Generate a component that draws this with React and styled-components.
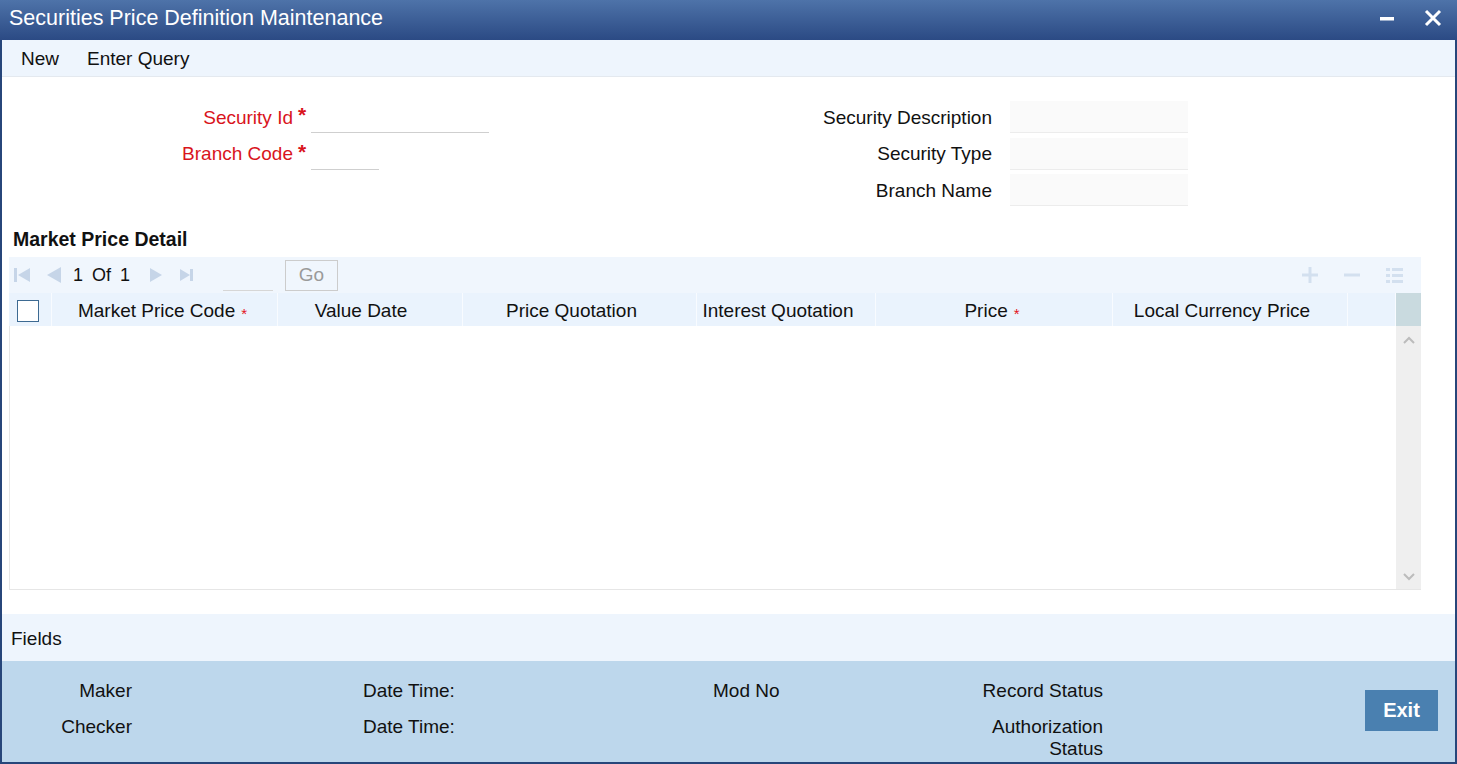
import React from "react";
import styled, { createGlobalStyle } from "styled-components";

const GlobalStyle = createGlobalStyle`
  html, body {
    margin: 0;
    padding: 0;
    background: #ffffff;
  }
  body {
    font-family: "Liberation Sans", Arial, sans-serif;
    color: #111;
  }
  * { box-sizing: border-box; }
`;

const Window = styled.div`
  width: 1457px;
  height: 764px;
  display: flex;
  flex-direction: column;
  overflow: hidden;
`;

const TitleBar = styled.div`
  height: 40px;
  flex: none;
  display: flex;
  align-items: center;
  padding: 0 9px 0 9px;
  background: linear-gradient(#4e73a9, #2b4a84);
  color: #fff;
`;

const Title = styled.div`
  flex: 1;
  font-size: 21.5px;
  margin-top: -4px;
`;

const TitleButton = styled.div`
  width: 30px;
  height: 30px;
  margin-left: 16px;
  display: flex;
  align-items: center;
  justify-content: center;
  margin-top: -5px;
`;

const Frame = styled.div`
  flex: 1;
  display: flex;
  flex-direction: column;
  border: 2px solid #27467a;
  border-top: none;
  min-height: 0;
`;

const MenuBar = styled.div`
  height: 37px;
  flex: none;
  display: flex;
  align-items: center;
  background: #eef5fd;
  border-bottom: 1px solid #e4e9ef;
  padding: 2px 0 0 5px;
`;

const MenuItem = styled.div`
  font-size: 19px;
  padding: 0 14px;
  color: #111;
`;

const Form = styled.div`
  display: flex;
  padding-top: 24px;
  flex: none;
`;

const Column = styled.div`
  width: ${(p) => p.$width}px;
  display: flex;
  flex-direction: column;
  gap: 4.5px;
`;

const Row = styled.div`
  height: 32px;
  display: flex;
  align-items: center;
`;

const Label = styled.div`
  width: ${(p) => p.$width}px;
  text-align: right;
  font-size: 19px;
  padding-top: 1px;
  color: ${(p) => (p.$required ? "#d9141c" : "#111")};
`;

const Star = styled.span`
  color: #d9141c;
  font-size: 21px;
  font-weight: bold;
  width: 18px;
  padding-left: 5px;
  align-self: flex-start;
  margin-top: 2px;
`;

const LineInput = styled.div`
  width: ${(p) => p.$width}px;
  height: 32px;
  border-bottom: 1px solid #cfcfcf;
`;

const BoxInput = styled.div`
  width: 178px;
  height: 32px;
  margin-left: 18px;
  background: #fafafa;
  border-bottom: 1px solid #ececec;
`;

const SectionTitle = styled.div`
  font-size: 19.5px;
  font-weight: bold;
  line-height: 24px;
  margin: 21px 0 0 11px;
  flex: none;
`;

const Grid = styled.div`
  margin: 6px 0 0 7px;
  width: 1412px;
  flex: none;
  display: flex;
  flex-direction: column;
`;

const GridToolbar = styled.div`
  height: 36px;
  background: #f0f6fd;
  display: flex;
  align-items: center;
  padding-left: 4px;
`;

const NavIcon = styled.svg`
  width: 18px;
  height: 18px;
  margin-right: ${(p) => p.$mr || 0}px;
  fill: #c6d5e8;
`;

const PageText = styled.span`
  font-size: 18px;
  margin: 0 18px 0 2px;
  word-spacing: 4px;
`;

const PageInput = styled.div`
  width: 50px;
  height: 32px;
  margin-left: 27px;
  border-bottom: 1px solid #d6d6d6;
`;

const GoButton = styled.div`
  width: 53px;
  height: 31px;
  margin-left: 12px;
  border: 1px solid #cccccc;
  color: #9a9a9a;
  font-size: 19px;
  display: flex;
  align-items: center;
  justify-content: center;
`;

const ToolIcons = styled.div`
  margin-left: auto;
  display: flex;
  align-items: center;
  gap: 24px;
  padding-right: 18px;
`;

const ToolIcon = styled.svg`
  width: 18px;
  height: 18px;
  fill: #d3e0ef;
`;

const HeaderRow = styled.div`
  height: 33px;
  display: grid;
  grid-template-columns: 43px 226px 185px 234px 179px 237px 235px 48px 25px;
  background: #eaf3fd;
`;

const HeaderCell = styled.div`
  display: flex;
  align-items: center;
  justify-content: center;
  font-size: 19px;
  padding-top: 2px;
  padding-right: ${(p) => p.$pr ?? 16}px;
  border-right: 1px solid #f8fbff;
  white-space: nowrap;
`;

const Checkbox = styled.div`
  width: 22px;
  height: 22px;
  border: 1px solid #3d6a92;
  background: #fff;
`;

const ReqMark = styled.span`
  color: #e3141c;
  font-size: 15px;
  margin-left: 6px;
  margin-top: 5px;
`;

const ScrollHead = styled.div`
  background: #c9dadf;
`;

const GridBody = styled.div`
  height: 264px;
  display: flex;
  border-left: 1px solid #e6e6e6;
  border-bottom: 1px solid #e6e6e6;
`;

const Rows = styled.div`
  flex: 1;
  background: #fff;
`;

const ScrollTrack = styled.div`
  width: 25px;
  background: #efefef;
  display: flex;
  flex-direction: column;
  justify-content: space-between;
  align-items: center;
  padding: 7px 0 5px;
`;

const Chevron = styled.svg`
  width: 14px;
  height: 14px;
  fill: none;
  stroke: #bcbcbc;
  stroke-width: 2;
`;

const FieldsBar = styled.div`
  margin-top: 24px;
  height: 47px;
  flex: none;
  background: #eef5fd;
  display: flex;
  align-items: center;
  padding: 3px 0 0 9px;
  font-size: 19px;
`;

const Footer = styled.div`
  flex: 1;
  background: #bdd7ec;
  display: flex;
  align-items: flex-start;
  padding-top: 19px;
`;

const FooterGrid = styled.div`
  display: grid;
  grid-template-columns: 130px 231px 350px 190px 200px;
  grid-auto-rows: auto;
  row-gap: 14px;
`;

const FooterLabel = styled.div`
  font-size: 19px;
  line-height: 22px;
  text-align: ${(p) => p.$align || "left"};
  grid-column: ${(p) => p.$col};
`;

const ExitButton = styled.div`
  margin: 10px 17px 0 auto;
  width: 73px;
  height: 41px;
  background: #4a80b0;
  color: #fff;
  font-weight: bold;
  font-size: 20px;
  display: flex;
  align-items: center;
  justify-content: center;
`;

export default function App() {
  return (
    <>
      <GlobalStyle />
      <Window>
        <TitleBar>
          <Title>Securities Price Definition Maintenance</Title>
          <TitleButton>
            <svg width="16" height="16" viewBox="0 0 16 16">
              <rect x="1" y="7" width="14" height="3.5" fill="#fff" />
            </svg>
          </TitleButton>
          <TitleButton>
            <svg width="18" height="18" viewBox="0 0 18 18">
              <path d="M2 2 L16 16 M16 2 L2 16" stroke="#fff" strokeWidth="3" />
            </svg>
          </TitleButton>
        </TitleBar>
        <Frame>
          <MenuBar>
            <MenuItem>New</MenuItem>
            <MenuItem>Enter Query</MenuItem>
          </MenuBar>

          <Form>
            <Column $width={698}>
              <Row>
                <Label $width={291} $required>Security Id</Label>
                <Star>*</Star>
                <LineInput $width={178} />
              </Row>
              <Row>
                <Label $width={291} $required>Branch Code</Label>
                <Star>*</Star>
                <LineInput $width={68} />
              </Row>
            </Column>
            <Column $width={700}>
              <Row>
                <Label $width={292}>Security Description</Label>
                <BoxInput />
              </Row>
              <Row>
                <Label $width={292}>Security Type</Label>
                <BoxInput />
              </Row>
              <Row>
                <Label $width={292}>Branch Name</Label>
                <BoxInput />
              </Row>
            </Column>
          </Form>

          <SectionTitle>Market Price Detail</SectionTitle>

          <Grid>
            <GridToolbar>
              <NavIcon viewBox="0 0 18 18" $mr={14}>
                <rect x="1" y="2" width="3" height="14" />
                <path d="M17 2 L5 9 L17 16 Z" />
              </NavIcon>
              <NavIcon viewBox="0 0 18 18" $mr={8}>
                <path d="M16 1 L2 9 L16 17 Z" />
              </NavIcon>
              <PageText>1 Of 1</PageText>
              <NavIcon viewBox="0 0 18 18" $mr={12}>
                <path d="M2 2 L14 9 L2 16 Z" />
              </NavIcon>
              <NavIcon viewBox="0 0 18 18">
                <path d="M2 3 L12 9 L2 15 Z" />
                <rect x="12" y="3" width="3" height="12" />
              </NavIcon>
              <PageInput />
              <GoButton>Go</GoButton>
              <ToolIcons>
                <ToolIcon viewBox="0 0 18 18">
                  <rect x="7.5" y="1" width="3" height="16" />
                  <rect x="1" y="7.5" width="16" height="3" />
                </ToolIcon>
                <ToolIcon viewBox="0 0 18 18">
                  <rect x="1" y="7.5" width="16" height="3" />
                </ToolIcon>
                <ToolIcon viewBox="0 0 18 18">
                  <rect x="1" y="2" width="4" height="3" />
                  <rect x="7" y="2" width="11" height="3" />
                  <rect x="1" y="8" width="4" height="3" />
                  <rect x="7" y="8" width="11" height="3" />
                  <rect x="1" y="14" width="4" height="3" />
                  <rect x="7" y="14" width="11" height="3" />
                </ToolIcon>
              </ToolIcons>
            </GridToolbar>

            <HeaderRow>
              <HeaderCell $pr={4}>
                <Checkbox />
              </HeaderCell>
              <HeaderCell $pr={4}>
                Market Price Code<ReqMark>*</ReqMark>
              </HeaderCell>
              <HeaderCell $pr={18}>Value Date</HeaderCell>
              <HeaderCell>Price Quotation</HeaderCell>
              <HeaderCell>Interest Quotation</HeaderCell>
              <HeaderCell $pr={4}>
                Price<ReqMark>*</ReqMark>
              </HeaderCell>
              <HeaderCell>Local Currency Price</HeaderCell>
              <HeaderCell $pr={0} />
              <ScrollHead />
            </HeaderRow>

            <GridBody>
              <Rows />
              <ScrollTrack>
                <Chevron viewBox="0 0 14 14">
                  <path d="M2 10 L7 5 L12 10" />
                </Chevron>
                <Chevron viewBox="0 0 14 14">
                  <path d="M2 4 L7 9 L12 4" />
                </Chevron>
              </ScrollTrack>
            </GridBody>
          </Grid>

          <FieldsBar>Fields</FieldsBar>

          <Footer>
            <FooterGrid>
              <FooterLabel $col={1} $align="right">Maker</FooterLabel>
              <FooterLabel $col={3}>Date Time:</FooterLabel>
              <FooterLabel $col={4}>Mod No</FooterLabel>
              <FooterLabel $col={5} $align="right">Record Status</FooterLabel>
              <FooterLabel $col={1} $align="right">Checker</FooterLabel>
              <FooterLabel $col={3}>Date Time:</FooterLabel>
              <FooterLabel $col={5} $align="right">
                Authorization
                <br />
                Status
              </FooterLabel>
            </FooterGrid>
            <ExitButton>Exit</ExitButton>
          </Footer>
        </Frame>
      </Window>
    </>
  );
}
